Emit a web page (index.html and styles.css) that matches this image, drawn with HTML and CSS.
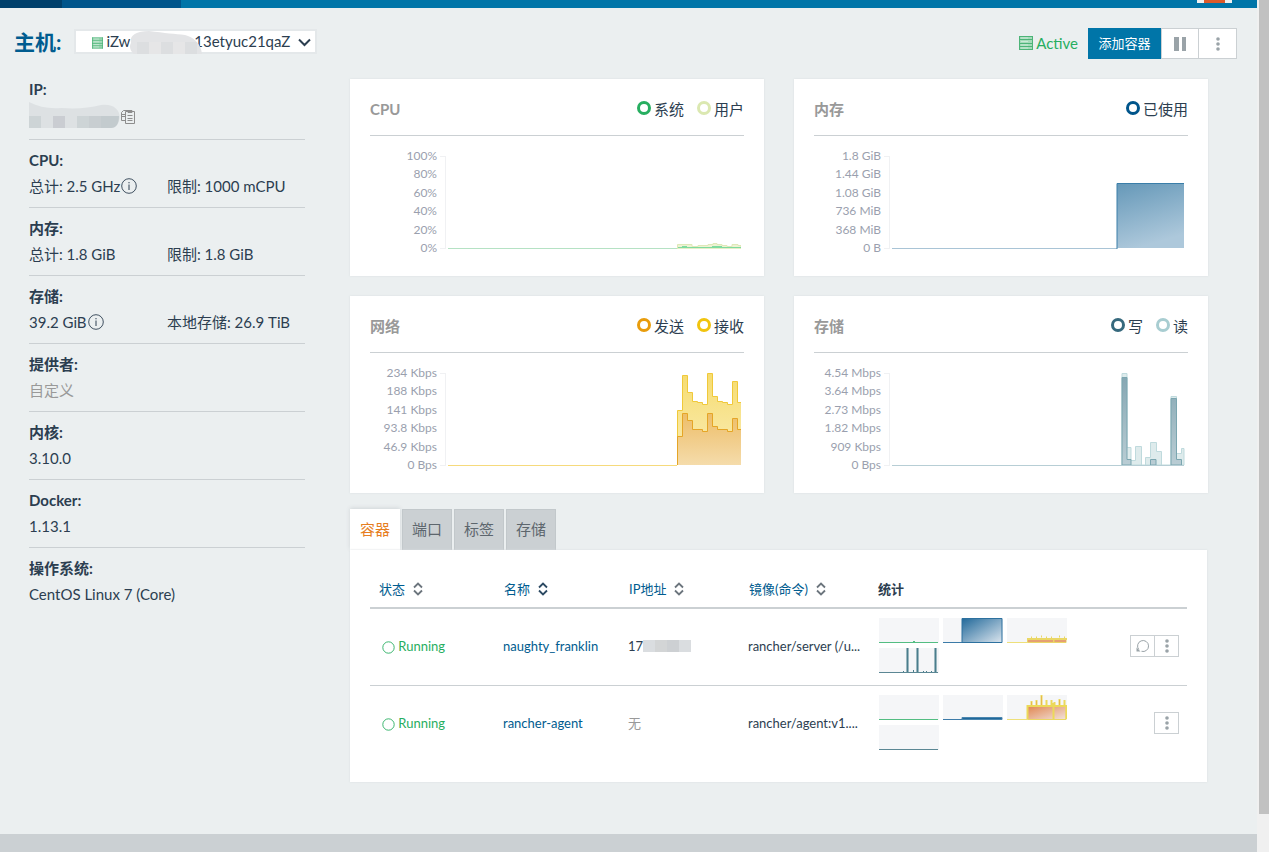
FILE: index.html
```html
<!DOCTYPE html>
<html lang="zh-CN">
<head>
    <meta charset="UTF-8">
    <meta name="viewport" content="width=device-width, initial-scale=1.0">
    <title>主机</title>
    <link rel="stylesheet" href="styles.css">
</head>
<body>
    <!-- Shared icons and gradients -->
    <svg class="defs" width="0" height="0" aria-hidden="true">
        <defs>
            <symbol id="icon-host" viewBox="0 0 14 14">
                <path d="M0 0h14v14H0z" fill="#a5dbba"/>
                <path d="M0 .5h14M0 3.500h14M0 7.500h14M0 10.500h14M0 13.500h14M.5 0v14M13.500 0v14" stroke="#4db478" fill="none"/>
                <path d="M2 2h7M2 5.500h7M2 9h7M2 12h7" stroke="#c9e9d6" fill="none"/>
            </symbol>
            <symbol id="icon-more" viewBox="0 0 4 14">
                <circle cx="2" cy="2" r="1.8"/><circle cx="2" cy="7" r="1.8"/><circle cx="2" cy="12" r="1.8"/>
            </symbol>
            <symbol id="icon-info" viewBox="0 0 16 16">
                <circle cx="8" cy="8" r="7.3" fill="none" stroke="currentColor" stroke-width=".9"/>
                <path d="M8 6.500v5.500M8 4v1.300" fill="none" stroke="currentColor"/>
            </symbol>
            <symbol id="icon-sort" viewBox="0 0 10 14">
                <path d="M1 5.5l4-4 4 4M1 8.5l4 4 4-4" fill="none" stroke="currentColor" stroke-width="1.8"/>
            </symbol>
            <symbol id="icon-ring" viewBox="0 0 13 13">
                <circle cx="6.5" cy="6.5" r="5.7" fill="none" stroke="currentColor" stroke-width=".9"/>
            </symbol>
            <linearGradient id="fill-memory" x1="0" y1="0" x2=".3" y2="1">
                <stop offset="0" stop-color="#6598b8"/><stop offset="1" stop-color="#adc8db"/>
            </linearGradient>
            <linearGradient id="fill-receive" x1="0" y1="0" x2="0" y2="1">
                <stop offset="0" stop-color="#f6dc70"/><stop offset="1" stop-color="#faedb8"/>
            </linearGradient>
            <linearGradient id="fill-send" x1="0" y1="0" x2="0" y2="1">
                <stop offset="0" stop-color="#edbd68"/><stop offset="1" stop-color="#f5dcab"/>
            </linearGradient>
            <linearGradient id="fill-write" x1="0" y1="0" x2="0" y2="1">
                <stop offset="0" stop-color="#86a7b3"/><stop offset="1" stop-color="#bacdd4"/>
            </linearGradient>
            <linearGradient id="fill-spark-memory" x1="0" y1="0" x2="1" y2="1">
                <stop offset="0" stop-color="#22699a"/><stop offset="1" stop-color="#dbe5ee"/>
            </linearGradient>
            <linearGradient id="fill-spark-network" x1="0" y1="0" x2="1" y2="1">
                <stop offset="0" stop-color="#e0854f"/><stop offset="1" stop-color="#f2e3dc"/>
            </linearGradient>
        </defs>
    </svg>

    <div class="page">
        <div class="topbar">
            <span class="topbar-logo"></span>
            <span class="topbar-env"></span>
            <span class="topbar-user"></span>
        </div>

        <header class="host-header">
            <h1><label for="host">主机:</label></h1>
            <div class="host-select">
                <svg class="host-icon" width="11" height="12"><use href="#icon-host"/></svg>
                <select id="host">
                    <option>iZw&emsp;&emsp;&emsp;&emsp;&emsp;&nbsp;&nbsp;13etyuc21qaZ</option>
                </select>
                <svg class="host-mask" width="76" height="23" viewBox="0 0 76 23">
                    <path d="M2 12C0 4 8 0 20 0C36 2 46 3 56 4C64 6 72 12 73 23H5C1 20 0 15 2 12z" fill="#e3e4e6"/>
                    <path d="M8 11h12v12H8zM32 11h12v12H32zM56 11h12v12H56z" fill="#dcdee0"/>
                    <path d="M20 11h12v12H20zM44 11h12v12H44z" fill="#e6e6e7"/>
                </svg>
                <svg class="host-arrow" width="13" height="9" viewBox="0 0 13 9"><path d="M1 1.5l5.500 5.500 5.500-5.500" fill="none" stroke="#2c3e50" stroke-width="2"/></svg>
            </div>
            <div class="host-state">
                <svg width="14" height="14"><use href="#icon-host"/></svg>
                <span>Active</span>
            </div>
            <div class="host-actions">
                <button class="btn-primary" type="button">添加容器</button>
                <button class="btn" type="button" aria-label="暂停">
                    <svg width="12" height="14" viewBox="0 0 12 14"><path d="M0 0h5v14H0zM8 0h4v14H8z"/></svg>
                </button>
                <button class="btn" type="button" aria-label="更多">
                    <svg width="4" height="14"><use href="#icon-more"/></svg>
                </button>
            </div>
        </header>

        <main>
            <dl class="info">
                <div class="info-item info-ip">
                    <dt>IP:</dt>
                    <dd>
                        <svg class="ip-mask" width="91" height="26" viewBox="0 0 91 26">
                            <path d="M0 0C10 5 20 7 32 6C48 7 60 6 72 3C86 1 93 10 90 19C89 23 86 26 82 26H0z" fill="#dde1e3"/>
                            <path d="M0 14h12v12H0zM48 14h12v12H48z" fill="#cdd4d6"/>
                            <path d="M24 14h12v12H24z" fill="#cacdd2"/>
                            <path d="M60 14h12v12H60z" fill="#c8ced1"/>
                            <path d="M72 14h18c0 8-3 12-8 12H72z" fill="#c3cbce"/>
                        </svg>
                        <svg width="16" height="16" viewBox="0 0 16 16" fill="#ebeff0" stroke="#8d8d8d">
                            <path d="M1.500 3.500l2-2h7v10h-9z"/>
                            <path d="M2 5.500h3M2 7.500h3"/>
                            <path d="M5.500 2.500h9v12h-9zM8 1.500h4v2H8zM7.500 6.500h5M7.500 9.500h5M7.500 11.500h5"/>
                        </svg>
                    </dd>
                </div>
                <div class="info-item">
                    <dt>CPU:</dt>
                    <dd>总计: 2.5 GHz <svg width="16" height="16"><use href="#icon-info"/></svg></dd>
                    <dd>限制: 1000 mCPU</dd>
                </div>
                <div class="info-item">
                    <dt>内存:</dt>
                    <dd>总计: 1.8 GiB</dd>
                    <dd>限制: 1.8 GiB</dd>
                </div>
                <div class="info-item">
                    <dt>存储:</dt>
                    <dd>39.2 GiB <svg width="16" height="16"><use href="#icon-info"/></svg></dd>
                    <dd>本地存储: 26.9 TiB</dd>
                </div>
                <div class="info-item">
                    <dt>提供者:</dt>
                    <dd class="muted">自定义</dd>
                </div>
                <div class="info-item">
                    <dt>内核:</dt>
                    <dd>3.10.0</dd>
                </div>
                <div class="info-item">
                    <dt>Docker:</dt>
                    <dd>1.13.1</dd>
                </div>
                <div class="info-item">
                    <dt>操作系统:</dt>
                    <dd>CentOS Linux 7 (Core)</dd>
                </div>
            </dl>

            <div class="content">
                <div class="cards">
                    <section class="card">
                        <div class="card-header">
                            <h2>CPU</h2>
                            <ul class="legend">
                                <li class="system">系统</li>
                                <li class="user">用户</li>
                            </ul>
                        </div>
                        <div class="chart">
                            <ul class="labels"><li>100%</li><li>80%</li><li>60%</li><li>40%</li><li>20%</li><li>0%</li></ul>
                            <div class="axis"></div>
                            <svg class="plot" viewBox="0 0 293 93" preserveAspectRatio="none">
                                <path d="M0 92.5H229" stroke="#b5e2c4"/>
                                <path d="M229.500 93V88.500H244V90.500H250V89.500H260V88.500H265V87.500H269V88.500H274V89.500H279V90.500H284V88.500H290V89.500H293V93z" fill="#eef2d2" stroke="#dfe8b8"/>
                                <path d="M230 91.500H293M234 90.500H239M264 90.500H274" stroke="#7fdb9f" fill="none"/>
                            </svg>
                        </div>
                    </section>

                    <section class="card">
                        <div class="card-header">
                            <h2>内存</h2>
                            <ul class="legend">
                                <li class="used">已使用</li>
                            </ul>
                        </div>
                        <div class="chart">
                            <ul class="labels"><li>1.8 GiB</li><li>1.44 GiB</li><li>1.08 GiB</li><li>736 MiB</li><li>368 MiB</li><li>0 B</li></ul>
                            <div class="axis"></div>
                            <svg class="plot" viewBox="0 0 293 93" preserveAspectRatio="none">
                                <path d="M0 92.500H225" stroke="#a9c4d6"/>
                                <path d="M225 27H292V92H225z" fill="url(#fill-memory)"/>
                                <path d="M225 93V27.500H292" fill="none" stroke="#3a7ea9"/>
                            </svg>
                        </div>
                    </section>

                    <section class="card">
                        <div class="card-header">
                            <h2>网络</h2>
                            <ul class="legend">
                                <li class="send">发送</li>
                                <li class="receive">接收</li>
                            </ul>
                        </div>
                        <div class="chart">
                            <ul class="labels"><li>234 Kbps</li><li>188 Kbps</li><li>141 Kbps</li><li>93.8 Kbps</li><li>46.9 Kbps</li><li>0 Bps</li></ul>
                            <div class="axis"></div>
                            <svg class="plot" viewBox="0 0 293 93" preserveAspectRatio="none">
                                <path d="M0 92.500H229" stroke="#f6da7c"/>
                                <path d="M229.500 92V37.500H234.500V2.500H239.500V19.500H244.500V28.500H249.500V29.500H254.500V31.500H259.500V.5H264.500V23.500H269.500V28.500H274.500V29.500H279.500V31.500H284.500V8.500H289.500V29.500H293V92z" fill="url(#fill-receive)"/>
                                <path d="M229.500 92V37.500H234.500V2.500H239.500V19.500H244.500V28.500H249.500V29.500H254.500V31.500H259.500V.5H264.500V23.500H269.500V28.500H274.500V29.500H279.500V31.500H284.500V8.500H289.500V29.500H293" fill="none" stroke="#f0c93a"/>
                                <path d="M229.500 92V63.500H234.500V40.500H239.500V47.500H244.500V56.500H254.500V58.500H259.500V40.500H264.500V53.500H269.500V56.500H279.500V58.500H284.500V45.500H289.500V56.500H293V92z" fill="url(#fill-send)"/>
                                <path d="M229.500 92V63.500H234.500V40.500H239.500V47.500H244.500V56.500H254.500V58.500H259.500V40.500H264.500V53.500H269.500V56.500H279.500V58.500H284.500V45.500H289.500V56.500H293" fill="none" stroke="#e5a526"/>
                            </svg>
                        </div>
                    </section>

                    <section class="card">
                        <div class="card-header">
                            <h2>存储</h2>
                            <ul class="legend">
                                <li class="write">写</li>
                                <li class="read">读</li>
                            </ul>
                        </div>
                        <div class="chart">
                            <ul class="labels"><li>4.54 Mbps</li><li>3.64 Mbps</li><li>2.73 Mbps</li><li>1.82 Mbps</li><li>909 Kbps</li><li>0 Bps</li></ul>
                            <div class="axis"></div>
                            <svg class="plot" viewBox="0 0 293 93" preserveAspectRatio="none">
                                <path d="M230 92V.5H235V74.500H239V87.500H243.500V73.500H249.500V92.500H253.500V84.500H258.500V69.500H264.500V78.500H269.500V92.500H279V23.500H284.500V80.500H289.500V75.500H292V92z" fill="#deebec" stroke="#bfdadd"/>
                                <path d="M230 92V4.500H235V86.500H239V92zM258.500 92V86.500H264V92zM279 92V25.500H284.500V86.500H289.500V92z" fill="url(#fill-write)" stroke="#7ba6b0"/>
                                <path d="M0 92.500H292" stroke="#b7ced5"/>
                            </svg>
                        </div>
                    </section>
                </div>

                <div class="tabs" role="tablist">
                    <button class="tab active" type="button" role="tab" aria-selected="true">容器</button>
                    <button class="tab" type="button" role="tab">端口</button>
                    <button class="tab" type="button" role="tab">标签</button>
                    <button class="tab" type="button" role="tab">存储</button>
                </div>

                <section class="panel">
                    <table>
                        <thead>
                            <tr>
                                <th class="col-state"><a href="#">状态 <svg width="10" height="14"><use href="#icon-sort"/></svg></a></th>
                                <th class="col-name"><a class="sorted" href="#">名称 <svg width="10" height="14"><use href="#icon-sort"/></svg></a></th>
                                <th class="col-ip"><a href="#">IP地址 <svg width="10" height="14"><use href="#icon-sort"/></svg></a></th>
                                <th class="col-image"><a href="#">镜像(命令) <svg width="10" height="14"><use href="#icon-sort"/></svg></a></th>
                                <th>统计</th>
                                <th class="col-actions"></th>
                            </tr>
                        </thead>
                        <tbody>
                            <tr>
                                <td class="state"><svg width="13" height="13"><use href="#icon-ring"/></svg> Running</td>
                                <td><a href="#">naughty_franklin</a></td>
                                <td>
                                    <span class="ip">17<svg width="48" height="12" viewBox="0 0 48 12">
                                        <path d="M0 0h48v12H0z" fill="#dadde0"/>
                                        <path d="M12 0h12v12H12z" fill="#d3d5d6"/>
                                        <path d="M24 0h12v12H24z" fill="#cdd0d3"/>
                                    </svg></span>
                                </td>
                                <td>rancher/server (/u...</td>
                                <td>
                                    <div class="sparks">
                                        <svg width="60" height="25"><path d="M0 24.500H59" stroke="#53bd82"/><path d="M34 23.500h2" stroke="#53bd82"/></svg>
                                        <svg width="60" height="25"><path d="M0 24.500H19" stroke="#3c7ba8"/><path d="M19 .5H59V24.500H19z" fill="url(#fill-spark-memory)" stroke="#2d719f"/></svg>
                                        <svg width="60" height="25">
                                            <path d="M0 24.500H20" stroke="#eee07a"/>
                                            <path d="M20.500 24.500V21.500H59V24.500z" fill="#e79a66" stroke="#ead765"/>
                                            <path d="M20 21H60M24 19.500h1M29 19.500h1M34 18.500h1M39 19.500h1M44 19.500h1M52 18.500h1M57 19.500h1M46.500 20v4" stroke="#ead765" stroke-width="2"/>
                                            <path d="M21 23H46M48 23H59" stroke="#e5a073" stroke-width="2"/>
                                        </svg>
                                        <svg width="60" height="25">
                                            <path d="M0 24.500H59" stroke="#5b8794"/>
                                            <path d="M28.500 0V24M38.500 0V24M56.500 0V24" stroke="#9ab7bf" stroke-width="3"/>
                                            <path d="M28.500 0V24M38.500 0V24M56.500 0V24M24.500 23V24M34.500 22V24M44.500 23V24M47.500 23V24M52.500 23V24" stroke="#4a7d8c"/>
                                        </svg>
                                    </div>
                                </td>
                                <td>
                                    <div class="btn-group">
                                        <button class="btn-sm" type="button" aria-label="重启">
                                            <svg width="14" height="14" viewBox="0 0 14 14"><path d="M2.800 10.500A5.500 5.500 0 1 1 5.500 12.300" fill="none" stroke="#9aa3a8"/><path d="M.5 8.500v4h4z" fill="#9aa3a8"/></svg>
                                        </button>
                                        <button class="btn-sm" type="button" aria-label="更多"><svg width="4" height="14"><use href="#icon-more"/></svg></button>
                                    </div>
                                </td>
                            </tr>
                            <tr>
                                <td class="state"><svg width="13" height="13"><use href="#icon-ring"/></svg> Running</td>
                                <td><a href="#">rancher-agent</a></td>
                                <td class="muted">无</td>
                                <td>rancher/agent:v1....</td>
                                <td>
                                    <div class="sparks">
                                        <svg width="60" height="25"><path d="M0 24.500H59" stroke="#53bd82"/></svg>
                                        <svg width="60" height="25"><path d="M0 24.500H19" stroke="#3c7ba8"/><path d="M19 22.500H59V24.500H19z" fill="#1f689b" stroke="#4a85ae"/></svg>
                                        <svg width="60" height="25">
                                            <path d="M0 24.500H20" stroke="#eee07a"/>
                                            <path d="M20.500 24.500V11H59V24.500z" fill="url(#fill-spark-network)" stroke="#ead765"/>
                                            <path d="M20 11H60M24.500 6V11M29.500 5V11M34.500 0V11M39.500 5V11M44.500 5V11M47.500 7V11M52.500 4V11M57.500 5V11M46.500 8V24M20.500 10V24M59.500 11V24" stroke="#ecd95a" stroke-width="2"/>
                                            <path d="M34.500 1V10M24.500 7V10M29.500 6V10M52.500 5V10" stroke="#e8b94c"/>
                                        </svg>
                                        <svg width="60" height="25"><path d="M0 24.500H59" stroke="#5b8794"/></svg>
                                    </div>
                                </td>
                                <td>
                                    <div class="btn-group">
                                        <button class="btn-sm" type="button" aria-label="更多"><svg width="4" height="14"><use href="#icon-more"/></svg></button>
                                    </div>
                                </td>
                            </tr>
                        </tbody>
                    </table>
                </section>
            </div>
        </main>
        <footer></footer>
    </div>

    <div class="scrollbar"><div class="scrollbar-thumb"></div></div>
</body>
</html>
```
FILE: styles.css
```css
*,
*::before {
    box-sizing: border-box;
}

body {
    display: flex;
    height: 100vh;
    margin: 0;
    overflow: hidden;
    background-color: #ebeff0;
    color: #2c3e50;
    font-family: Lato, "Noto Sans CJK SC", sans-serif;
    font-size: 15px;
}

h1, h2, ul, dl, dd {
    margin: 0;
    padding: 0;
}

ul {
    list-style: none;
}

a {
    color: #005c8f;
    text-decoration: none;
}

button, select {
    font-family: inherit;
    cursor: pointer;
}

.defs {
    position: absolute;
}

.muted {
    color: #999;
}

.page {
    flex: 1;
    display: flex;
    flex-direction: column;
    min-width: 0;
}

/* top bar */
.topbar {
    display: flex;
    flex: none;
    height: 8px;
    padding-right: 25px;
    background-color: #0075a8;
}

.topbar-logo {
    width: 62px;
    background-color: #00406b;
}

.topbar-env {
    width: 119px;
    background-color: #00558b;
}

.topbar-user {
    width: 35px;
    height: 3px;
    margin-left: auto;
    border: solid #f0f0f0;
    border-width: 0 7px;
    background-color: #dc5a2b;
}

/* host header */
.host-header {
    display: flex;
    align-items: center;
    padding: 20px 20px 10px 14px;
}

h1 {
    margin-right: 13px;
    margin-bottom: 4px;
    color: #005c8f;
    font-size: 21px;
    line-height: 27px;
}

.host-select {
    position: relative;
    margin-bottom: 4px;
}

.host-select select {
    display: block;
    width: 243px;
    height: 25px;
    padding: 0 0 2px 30px;
    border: 2px solid #e4e8ea;
    border-radius: 0;
    background-color: #fff;
    color: #2c3e50;
    font-size: 15px;
    appearance: none;
}

.host-icon {
    position: absolute;
    top: 8px;
    left: 18px;
}

.host-mask {
    position: absolute;
    top: 2px;
    left: 55px;
}

.host-arrow {
    position: absolute;
    top: 9px;
    right: 6px;
}

.host-state {
    display: flex;
    align-items: center;
    gap: 3px;
    margin-bottom: 2px;
    margin-left: auto;
    margin-right: 10px;
    color: #27ae60;
}

.host-actions,
.btn-group {
    display: flex;
}

.btn-primary {
    min-width: 73px;
    height: 31px;
    padding: 0 10px 2px;
    border: none;
    background-color: #0075a8;
    color: #fff;
    font-size: 13px;
}

.btn,
.btn-sm {
    display: flex;
    align-items: center;
    justify-content: center;
    padding: 0;
    border: 1px solid #cbd0d3;
    background-color: #fff;
    fill: #9aa3a8;
}

.btn {
    width: 38px;
    height: 31px;
}

.btn + .btn {
    width: 39px;
    margin-left: -1px;
}

.btn-sm {
    width: 25px;
    height: 22px;
}

.btn-sm + .btn-sm {
    margin-left: -1px;
}

/* main layout */
main {
    display: flex;
    padding: 0 50px 52px 29px;
}

.info {
    flex: none;
    width: 276px;
    margin-right: 45px;
}

.info-item {
    display: grid;
    grid-template-columns: 1fr 1fr;
    padding: 7px 0 8px;
    border-bottom: 1px solid #cbd0d3;
    line-height: 26px;
}

.info-item:last-child {
    border-bottom: none;
}

.info dt {
    grid-column: 1 / -1;
    font-weight: bold;
}

.info dd {
    display: flex;
    align-items: center;
    gap: 1px;
    height: 26px;
    white-space: nowrap;
}

.info-ip dd {
    gap: 0;
    height: 29px;
}

.ip-mask {
    align-self: flex-start;
}

.content {
    flex: 1;
    min-width: 0;
    padding-top: 10px;
}

.cards {
    display: grid;
    grid-template-columns: 1fr 1fr;
    gap: 20px 30px;
    margin-bottom: 16px;
}

.card,
.panel {
    background-color: #fff;
    box-shadow: 0 0 2px #d8dde0;
}

.card {
    padding: 20px 20px 21px;
}

.card-header {
    display: flex;
    justify-content: space-between;
    padding-bottom: 15px;
    border-bottom: 1px solid #cbd0d3;
    line-height: 21px;
}

.card-header h2 {
    color: #999;
    font-size: 15px;
}

.legend {
    display: flex;
    gap: 13px;
}

.legend li {
    display: flex;
    gap: 3px;
}

.legend li::before {
    content: "";
    width: 14px;
    height: 14px;
    margin-top: 2px;
    border-width: 3px;
    border-style: solid;
    border-radius: 50%;
}

.legend .system::before { border-color: #27ae60; }
.legend .user::before { border-color: #dbe8b1; }
.legend .used::before { border-color: #00558b; }
.legend .send::before { border-color: #e89c0c; }
.legend .receive::before { border-color: #f1c40f; }
.legend .write::before { border-color: #36697d; }
.legend .read::before { border-color: #a8cdd1; }

.chart {
    display: flex;
    align-items: center;
    padding: 13px 3px 0 0;
}

.labels {
    display: flex;
    flex-direction: column;
    justify-content: space-between;
    width: 67px;
    height: 106px;
    margin-right: 3px;
    color: #9a9fae;
    font-size: 12px;
    line-height: 14px;
    text-align: right;
}

.axis {
    width: 6px;
    height: 93px;
    margin-right: 2px;
    border: 1px solid #f0f1f3;
    border-left: none;
}

.plot {
    flex: 1;
    min-width: 0;
    height: 93px;
    fill: none;
}

/* tabs */
.tabs {
    display: flex;
    gap: 2px;
}

.tab {
    height: 41px;
    padding: 0 9px 3px;
    border: 1px solid #c2c8cb;
    border-bottom: none;
    background-color: #cbd0d3;
    color: #5d666d;
    font-size: 15px;
}

.tab.active {
    border-color: #fff;
    background-color: #fff;
    box-shadow: 0 -1px 4px #d0d5d8;
    color: #e67e22;
}

.panel {
    position: relative;
    padding: 20px;
}

table {
    width: 100%;
    border-collapse: collapse;
    table-layout: fixed;
    font-size: 13px;
}

th {
    height: 38px;
    padding: 0 8px;
    border-bottom: 2px solid #cbd0d3;
    text-align: left;
    white-space: nowrap;
}

th a {
    display: flex;
    align-items: center;
    gap: 8px;
    padding-left: 1px;
    font-weight: normal;
}

th svg {
    color: #6c757d;
}

th .sorted svg {
    color: #2c4a63;
}

.col-state,
.col-name {
    width: 125px;
}

.col-ip {
    width: 120px;
}

.col-image {
    width: 130px;
}

.col-actions {
    width: 80px;
}

td {
    padding: 9px 8px 12px;
    white-space: nowrap;
}

tbody tr + tr {
    border-top: 1px solid #cbd0d3;
}

.state {
    padding-left: 12px;
    color: #27ae60;
}

.state svg {
    vertical-align: -3px;
}

.ip {
    display: flex;
    align-items: center;
}

.sparks {
    display: flex;
    flex-wrap: wrap;
    gap: 5px 4px;
    width: 190px;
    padding-left: 1px;
}

.sparks svg {
    background-color: #f5f6f8;
    fill: none;
}

td .btn-group {
    justify-content: flex-end;
}

footer {
    flex: 1;
    min-height: 18px;
    background-color: #cbd0d3;
}

/* scrollbar */
.scrollbar {
    flex: none;
    width: 12px;
    padding-left: 2px;
    background-color: #f0f0f0;
}

.scrollbar-thumb {
    height: 95.5%;
    background-color: #c1c1c1;
}
```
